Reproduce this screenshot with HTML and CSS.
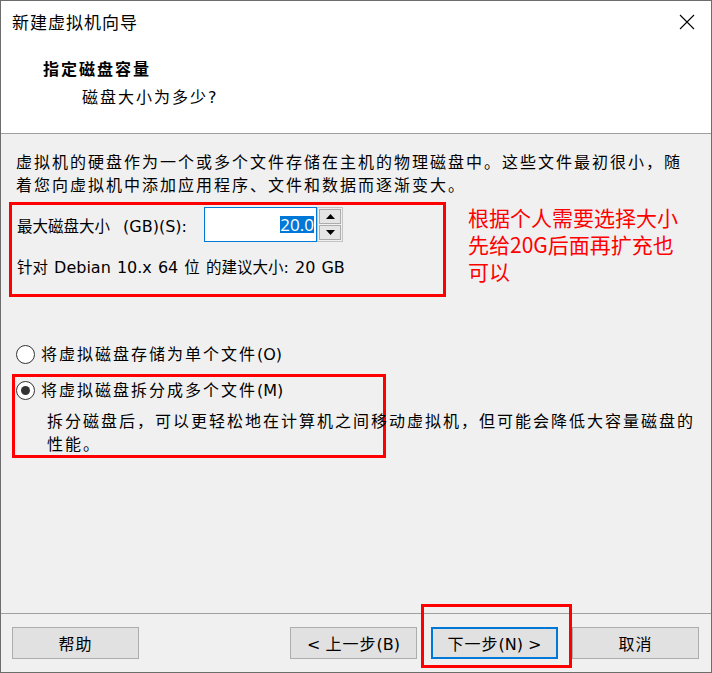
FILE: index.html
```html
<!DOCTYPE html>
<html lang="zh-CN">
<head>
    <meta charset="UTF-8">
    <title>新建虚拟机向导</title>
    <link rel="stylesheet" href="styles.css">
</head>
<body>
    <div class="wizard">
        <div class="wizard-header">
            <div class="titlebar">
                <span class="title">新建虚拟机向导</span>
                <svg class="close" width="16" height="16" viewBox="0 0 16 16">
                    <path d="M1 1L15 15M15 1L1 15" stroke="#000" stroke-width="1.1" fill="none"/>
                </svg>
            </div>
            <div class="step-title">指定磁盘容量</div>
            <div class="step-subtitle">磁盘大小为多少<span class="latin">?</span></div>
        </div>

        <div class="wizard-body">
            <p class="intro">虚拟机的硬盘作为一个或多个文件存储在主机的物理磁盘中。这些文件最初很小，随着您向虚拟机中添加应用程序、文件和数据而逐渐变大。</p>

            <div class="size-row">
                <div class="size-box mark">
                    <div class="size-field">
                        <label class="size-label">最大磁盘大小<span class="latin unit"> (GB)(S):</span></label>
                        <div class="spinner">
                            <div class="spin-input"><span class="spin-value">20.0</span></div>
                            <div class="spin-buttons">
                                <span class="spin-btn">
                                    <svg width="9" height="5" viewBox="0 0 9 5"><path d="M0 5H9L4.5 0Z"/></svg>
                                </span>
                                <span class="spin-btn">
                                    <svg width="9" height="5" viewBox="0 0 9 5"><path d="M0 0H9L4.5 5Z"/></svg>
                                </span>
                            </div>
                        </div>
                    </div>
                    <div class="size-hint">针对<span class="latin"> Debian 10.x 64 </span>位<span class="latin"> </span>的建议大小<span class="latin">: 20 GB</span></div>
                </div>
                <div class="note">根据个人需要选择大小先给20G后面再扩充也可以</div>
            </div>

            <div class="options">
                <div class="option option-single">
                    <span class="radio"></span>
                    <span>将虚拟磁盘存储为单个文件<span class="latin">(O)</span></span>
                </div>
                <div class="option-split mark">
                    <div class="option">
                        <span class="radio checked"></span>
                        <span>将虚拟磁盘拆分成多个文件<span class="latin">(M)</span></span>
                    </div>
                    <p class="option-desc">拆分磁盘后，可以更轻松地在计算机之间移动虚拟机，但可能会降低大容量磁盘的性能。</p>
                </div>
            </div>
        </div>

        <div class="wizard-footer">
            <button class="btn">帮助</button>
            <div class="nav">
                <button class="btn"><span class="latin">&lt; </span>上一步<span class="latin">(B)</span></button>
                <div class="next-wrap">
                    <button class="btn btn-default">下一步<span class="latin">(N) &gt;</span></button>
                </div>
                <button class="btn">取消</button>
            </div>
        </div>
    </div>
</body>
</html>
```

FILE: styles.css
```css
body {
    margin: 0;
    font-family: "Noto Sans CJK SC", sans-serif;
    color: #000;
}
.wizard {
    width: 712px;
    height: 673px;
    box-sizing: border-box;
    border: 1px solid #6d6d6d;
    display: flex;
    flex-direction: column;
    background: #f0f0f0;
}
.latin {
    font-family: "DejaVu Sans", sans-serif;
    font-size: 16px;
    letter-spacing: 0;
}

/* header */
.wizard-header {
    flex: none;
    height: 133px;
    box-sizing: border-box;
    background: #fff;
    border-bottom: 1px solid #a0a0a0;
}
.titlebar {
    display: flex;
    justify-content: space-between;
    align-items: center;
    height: 24px;
    padding: 9px 16px 0 11px;
}
.title {
    font-size: 17px;
    letter-spacing: 1px;
    line-height: 24px;
}
.step-title {
    margin-top: 20px;
    padding-left: 42px;
    font-size: 16px;
    font-weight: bold;
    letter-spacing: 2px;
    line-height: 28px;
}
.step-subtitle {
    padding-left: 81px;
    font-size: 16px;
    letter-spacing: 2px;
    line-height: 28px;
}

/* body */
.wizard-body {
    flex: 1;
    padding: 16px 0 0 8px;
}
.intro {
    margin: 0 0 6px 7px;
    width: 676px;
    font-size: 16px;
    letter-spacing: 2px;
    line-height: 23px;
}
.mark {
    border: 3px solid #f00;
}
.size-row {
    display: flex;
    align-items: flex-start;
}
.size-box {
    width: 437px;
    height: 95px;
    box-sizing: border-box;
    padding: 2px 0 0 5px;
}
.size-field {
    display: flex;
    align-items: center;
    height: 35px;
}
.size-label,
.size-hint {
    font-size: 15.5px;
}
.size-hint .latin {
    word-spacing: 1px;
}
.size-label .unit {
    word-spacing: 8px;
}
.size-label {
    width: 187px;
    flex: none;
}
.size-hint {
    margin-top: 12px;
    line-height: 24px;
}
.spinner {
    display: flex;
}
.spin-input {
    width: 113px;
    height: 35px;
    box-sizing: border-box;
    border: 1px solid #0078d7;
    background: #fff;
    display: flex;
    align-items: center;
    justify-content: flex-end;
    padding-right: 2px;
}
.spin-value {
    background: #0078d7;
    color: #fff;
    font-family: "Open Sans", sans-serif;
    font-size: 17px;
    line-height: 17px;
}
.spin-buttons {
    width: 26px;
    height: 35px;
    box-sizing: border-box;
    border: 1px solid #c4c4c4;
    padding: 1px;
    display: flex;
    flex-direction: column;
    gap: 1px;
    background: #f0f0f0;
}
.spin-btn {
    flex: 1;
    background: #e5e5e5;
    border: 1px solid #acacac;
    display: flex;
    align-items: center;
    justify-content: center;
}
.note {
    margin: 2px 0 0 22px;
    width: 220px;
    color: #f00;
    font-size: 21px;
    line-height: 27px;
}

/* disk file options */
.options {
    margin: 44px 0 0 3px;
}
.option {
    display: flex;
    align-items: center;
    gap: 6px;
    font-size: 16px;
    letter-spacing: 2px;
    line-height: 24px;
}
.option-single {
    padding-left: 4px;
}
.radio {
    flex: none;
    width: 19px;
    height: 19px;
    box-sizing: border-box;
    border: 1px solid #333;
    border-radius: 50%;
    background: #fff;
    display: flex;
    align-items: center;
    justify-content: center;
}
.radio.checked::after {
    content: "";
    width: 9px;
    height: 9px;
    border-radius: 50%;
    background: #333;
}
.option-split {
    width: 374px;
    height: 84px;
    box-sizing: border-box;
    margin-top: 7px;
    padding-left: 1px;
}
.option-desc {
    margin: 6px 0 0 31px;
    width: 655px;
    font-size: 16px;
    letter-spacing: 2px;
    line-height: 23px;
}

/* footer */
.wizard-footer {
    flex: none;
    height: 59px;
    box-sizing: border-box;
    border-top: 1px solid #a0a0a0;
    padding: 13px 12px 0 11px;
    display: flex;
    justify-content: space-between;
    align-items: flex-start;
}
.nav {
    display: flex;
    gap: 14px;
}
.btn {
    width: 127px;
    height: 32px;
    box-sizing: border-box;
    padding: 0;
    border: 1px solid #adadad;
    background: #e1e1e1;
    font-family: "Noto Sans CJK SC", sans-serif;
    font-size: 16px;
    letter-spacing: 1px;
    color: #000;
}
.btn-default {
    border: 2px solid #0078d7;
}
.next-wrap {
    position: relative;
    display: flex;
}
.next-wrap::after {
    content: "";
    position: absolute;
    top: -23px;
    right: -14px;
    bottom: -9px;
    left: -10px;
    border: 3px solid #f00;
    pointer-events: none;
}
```
